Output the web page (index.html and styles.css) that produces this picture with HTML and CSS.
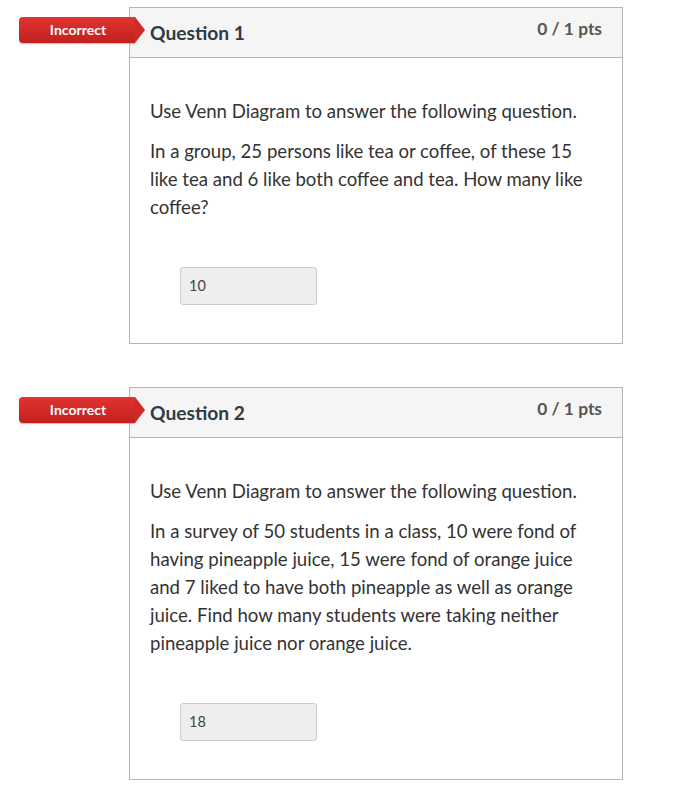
FILE: index.html
```html
<!DOCTYPE html>
<html lang="en">

<head>
  <meta charset="UTF-8">
  <meta name="viewport" content="width=device-width, initial-scale=1.0">
  <title>Quiz Results</title>
  <link rel="stylesheet" href="styles.css">
</head>

<body>
  <div class="quiz">

    <!-- Question 1 -->
    <div class="question">
      <span class="answer-flag">Incorrect</span>
      <div class="question-header">
        <h2 class="question-title">Question 1</h2>
        <span class="question-points">0 / 1 pts</span>
      </div>
      <div class="question-body">
        <p>Use Venn Diagram to answer the following question.</p>
        <p>In a group, 25 persons like tea or coffee, of these 15 like tea and 6 like both coffee and tea. How many like coffee?</p>
        <div class="answer-box">10</div>
      </div>
    </div>

    <!-- Question 2 -->
    <div class="question">
      <span class="answer-flag">Incorrect</span>
      <div class="question-header">
        <h2 class="question-title">Question 2</h2>
        <span class="question-points">0 / 1 pts</span>
      </div>
      <div class="question-body">
        <p>Use Venn Diagram to answer the following question.</p>
        <p>In a survey of 50 students in a class, 10 were fond of having pineapple juice, 15 were fond of orange juice and 7 liked to have both pineapple as well as orange juice. Find how many students were taking neither pineapple juice nor orange juice.</p>
        <div class="answer-box">18</div>
      </div>
    </div>

  </div>
</body>

</html>
```

FILE: styles.css
```css
* {
  margin: 0;
  padding: 0;
  box-sizing: border-box;
}

body {
  font-family: Lato, 'Liberation Sans', Arial, sans-serif;
  background-color: #fff;
  color: #2d3b45;
}

.quiz {
  padding: 7px 0 0 129px;
  width: 623px;
  display: flex;
  flex-direction: column;
  gap: 43px;
}

/* 題目卡片 */
.question {
  position: relative;
  border: 1px solid #b5b5b5;
}

.answer-flag {
  position: absolute;
  top: 9px;
  left: -111px;
  width: 116px;
  height: 26px;
  line-height: 26px;
  padding-left: 2px;
  text-align: center;
  font-size: 14px;
  font-weight: bold;
  color: #fff;
  background: linear-gradient(#e0342f, #c2201f);
  border-radius: 4px 0 0 4px;
  box-shadow: 0 1px 1px rgba(0, 0, 0, 0.25);
}

.answer-flag::after {
  content: '';
  position: absolute;
  top: 0;
  right: -10px;
  border-top: 13px solid transparent;
  border-bottom: 13px solid transparent;
  border-left: 10px solid #d02a27;
}

.question-header {
  display: flex;
  justify-content: space-between;
  align-items: flex-start;
  height: 50px;
  padding: 0 20px;
  background-color: #f5f5f5;
  border-bottom: 1px solid #b5b5b5;
}

.question-title {
  margin-top: 12px;
  font-size: 19.2px;
  font-weight: bold;
  line-height: 26px;
}

.question-points {
  margin-top: 10px;
  font-size: 17.4px;
  font-weight: bold;
  line-height: 22px;
  color: #555;
}

/* 題目內容 */
.question-body {
  padding: 39px 38px 38px 20px;
  font-size: 18.6px;
  line-height: 28px;
  color: #333;
}

.question-body p {
  margin-bottom: 12px;
}

.answer-box {
  width: 137px;
  height: 38px;
  margin: 46px 0 0 30px;
  padding: 0 8px;
  font-size: 14.5px;
  line-height: 36px;
  color: #444;
  background-color: #eee;
  border: 1px solid #ccc;
  border-radius: 3px;
}
```
